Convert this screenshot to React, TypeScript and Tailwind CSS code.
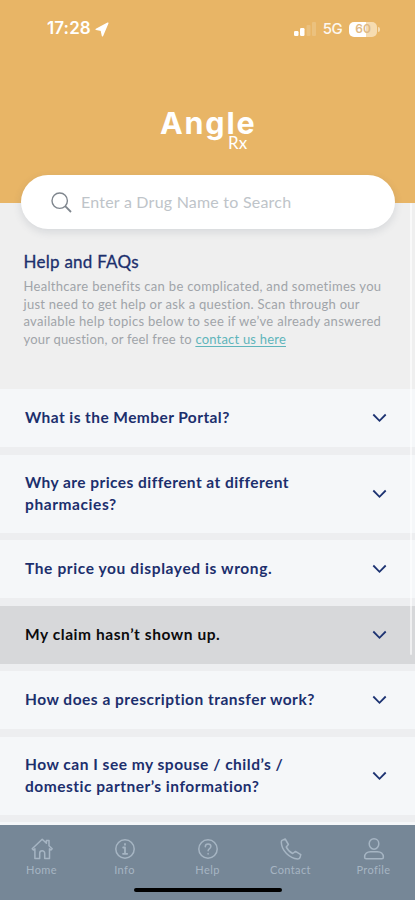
import React from 'react';

interface Faq {
  lines: string[];
  tracking: string[];
  active?: boolean;
}

const faqs: Faq[] = [
  { lines: ['What is the Member Portal?'], tracking: ['tracking-[0.42px]'] },
  {
    lines: ['Why are prices different at different', 'pharmacies?'],
    tracking: ['tracking-[0.44px]', 'tracking-[0.58px]'],
  },
  { lines: ['The price you displayed is wrong.'], tracking: ['tracking-[0.61px]'] },
  { lines: ['My claim hasn’t shown up.'], tracking: ['tracking-[0.56px]'], active: true },
  { lines: ['How does a prescription transfer work?'], tracking: ['tracking-[0.5px]'] },
  {
    lines: ['How can I see my spouse / child’s /', 'domestic partner’s information?'],
    tracking: ['tracking-[0.5px]', 'tracking-[0.5px]'],
  },
];

function StatusBar() {
  return (
    <div className="flex h-[58px] items-center justify-between pl-[47px] pr-[35px] text-white font-['Inter',sans-serif]">
      <div className="flex items-center gap-[4px]">
        <span className="text-[17px] font-semibold tracking-[0.1px]">17:28</span>
        <svg width="14" height="15" viewBox="0 0 14 15" fill="currentColor" stroke="currentColor" strokeWidth="1.4" strokeLinejoin="round">
          <path d="M12.800 1.200 1.200 7.300 6.300 8.300 7.500 13.800Z" />
        </svg>
      </div>
      <div className="flex items-center">
        <svg width="22" height="14" viewBox="0 0 22 14" fill="currentColor">
          <rect x="0" y="9" width="4.5" height="5" rx="1.2" />
          <rect x="6" y="6" width="4.5" height="8" rx="1.2" />
          <rect x="12.5" y="3" width="4" height="11" rx="1" opacity=".16" />
          <rect x="18" y="0" width="4" height="14" rx="1" opacity=".16" />
        </svg>
        <span className="ml-[7px] text-[15px] font-medium tracking-[-0.6px] opacity-90">5G</span>
        <div className="ml-[7px] flex h-[15px] w-[28px] items-center justify-center rounded-[5px] bg-[linear-gradient(90deg,#fff_62%,#f6dcb1_62%)] text-[12px] font-semibold leading-none text-[#dfb985]">
          60
        </div>
        <div className="ml-px h-[5px] w-[2px] rounded-r-full bg-[#f6dcb1]" />
      </div>
    </div>
  );
}

function Chevron() {
  return (
    <svg width="15" height="10" viewBox="0 0 15 10" fill="none" stroke="#1d3372" strokeWidth="1.8">
      <path d="m1.3 1.5 6.2 6.3 6.2-6.3" />
    </svg>
  );
}

function FaqItem({ lines, tracking, active }: Faq) {
  return (
    <button
      className={`flex w-full shrink-0 items-center justify-between pl-[25px] pr-[28px] text-left ${
        lines.length > 1 ? 'h-[78px]' : 'h-[58px]'
      } ${active ? 'bg-[#d7d8da] text-[#0b0b0d]' : 'bg-[#f5f7f9] text-[#1c2f6d]'}`}
    >
      <span className="text-[15.5px] font-bold leading-[21.5px]">
        {lines.map((line, i) => (
          <span key={line} className={`block whitespace-nowrap ${tracking[i]}`}>
            {line}
          </span>
        ))}
      </span>
      <Chevron />
    </button>
  );
}

function NavIcon({ children }: { children: React.ReactNode }) {
  return (
    <svg
      width="24"
      height="24"
      viewBox="0 0 24 24"
      fill="none"
      stroke="currentColor"
      strokeWidth="1.5"
      strokeLinejoin="round"
      strokeLinecap="round"
    >
      {children}
    </svg>
  );
}

const navItems = [
  {
    label: 'Home',
    icon: (
      <path d="M2.2 11.8 12.2 2.2l4.2 4V3.400h2.600v5.300l3.200 3.100-1.200 1.200-1.500-1.200v9.700h-4.800v-5.300a2.500 2.500 0 0 0-5 0v5.300H4.900v-9.700l-1.500 1.200Z" />
    ),
  },
  {
    label: 'Info',
    icon: (
      <>
        <circle cx="12" cy="12" r="9.2" />
        <path d="M10.2 10.5H12v6M10 16.8h4.2M12 7v.8" strokeWidth="1.8" />
      </>
    ),
  },
  {
    label: 'Help',
    icon: (
      <>
        <circle cx="12" cy="12" r="9.2" />
        <path d="M9.3 9.8c0-1.7 1.2-2.7 2.8-2.7s2.8 1 2.8 2.5c0 1.9-2.8 2.1-2.8 4.2M12.1 16.6v.4" />
      </>
    ),
  },
  {
    label: 'Contact',
    icon: (
      <path d="M3 3.4 6.2 2l3.2 5.5-2.200 2.400c1.300 3 3.600 5.200 6.500 6.600l2.800-2.100 5.300 3.200-.8 3c-.4.9-1.200 1.300-2.300 1.300C10.500 21.500 2.500 13.500 2.300 5.300c0-.8.2-1.500.7-1.900Z" />
    ),
  },
  {
    label: 'Profile',
    icon: (
      <>
        <path d="M12 1.8c2.900 0 4.800 2.100 4.800 4.900S14.800 12.200 12 12.200 7.200 9.500 7.200 6.700 9.100 1.800 12 1.800Z" />
        <path d="M2.600 20.300c0-3.600 2.700-5.600 6-5.600h6.800c3.300 0 6 2 6 5.600 0 .9-.6 1.500-1.500 1.500H4.100c-.9 0-1.500-.6-1.500-1.500Z" />
      </>
    ),
  },
];

export default function App() {
  return (
    <div className="relative flex h-[900px] w-[415px] flex-col overflow-hidden bg-[#edeef0] font-['Lato',sans-serif]">
      <header className="h-[203px] shrink-0 bg-[#e8b566]">
        <StatusBar />
        <div className="flex flex-col pl-[160px] pt-[47px] text-white">
          <span className="text-[30.5px] font-bold leading-[36px] tracking-[1.8px] font-['Inter',sans-serif]">Angle</span>
          <span className="-mt-[8px] pl-[68px] text-[17px] leading-[20px]">Rx</span>
        </div>
      </header>

      <label className="relative z-10 -mt-[28px] ml-[21px] flex h-[54px] w-[374px] shrink-0 items-center rounded-full bg-white pl-[30px] shadow-[0_3px_8px_rgba(60,70,90,0.14)]">
        <svg width="21" height="21" viewBox="0 0 21 21" fill="none" stroke="#7f868e" strokeWidth="1.4">
          <circle cx="8.7" cy="8.7" r="7.7" />
          <path d="m14.2 14.2 5.8 5.8" strokeWidth="1.8" />
        </svg>
        <span className="ml-[9px] whitespace-nowrap text-[16px] tracking-[0.22px] text-[#bec4c9]">
          Enter a Drug Name to Search
        </span>
      </label>

      <section className="-mt-[26px] h-[186px] shrink-0 bg-[#efefef] pl-[23.5px] pt-[48px]">
        <h1 className="text-[17px] font-normal leading-[22px] tracking-[0.26px] text-[#1c2f6d] [-webkit-text-stroke:0.3px]">
          Help and FAQs
        </h1>
        <p className="mt-[5px] whitespace-nowrap text-[13px] leading-[17.5px] text-[#a0a4a9]">
          <span className="block tracking-[0.3px]">Healthcare benefits can be complicated, and sometimes you</span>
          <span className="block tracking-[0.27px]">just need to get help or ask a question. Scan through our</span>
          <span className="block tracking-[0.3px]">available help topics below to see if we’ve already answered</span>
          <span className="block tracking-[0.2px]">
            your question, or feel free to{' '}
            <a className="text-[#5fb5bb] underline underline-offset-2">contact us here</a>
          </span>
        </p>
      </section>

      <main className="flex min-h-0 flex-1 flex-col gap-[7.5px] overflow-hidden">
        {faqs.map((faq) => (
          <FaqItem key={faq.lines[0]} {...faq} />
        ))}
        <div className="h-[58px] shrink-0 bg-[#f5f7f9]" />
      </main>

      <nav className="flex h-[75px] shrink-0 flex-col bg-[#768797] text-[#a6b5c3]">
        <div className="grid grid-cols-5 pt-[12px]">
          {navItems.map((item) => (
            <div key={item.label} className="flex flex-col items-center">
              <NavIcon>{item.icon}</NavIcon>
              <span className="mt-px text-[11px] leading-[16px] tracking-[0.4px]">{item.label}</span>
            </div>
          ))}
        </div>
        <div className="mx-auto mt-[10px] h-[4px] w-[148px] rounded-full bg-black" />
      </nav>

      <div className="absolute left-[410px] top-[203px] h-[452px] w-[2px] rounded-full bg-white/60" />
    </div>
  );
}
